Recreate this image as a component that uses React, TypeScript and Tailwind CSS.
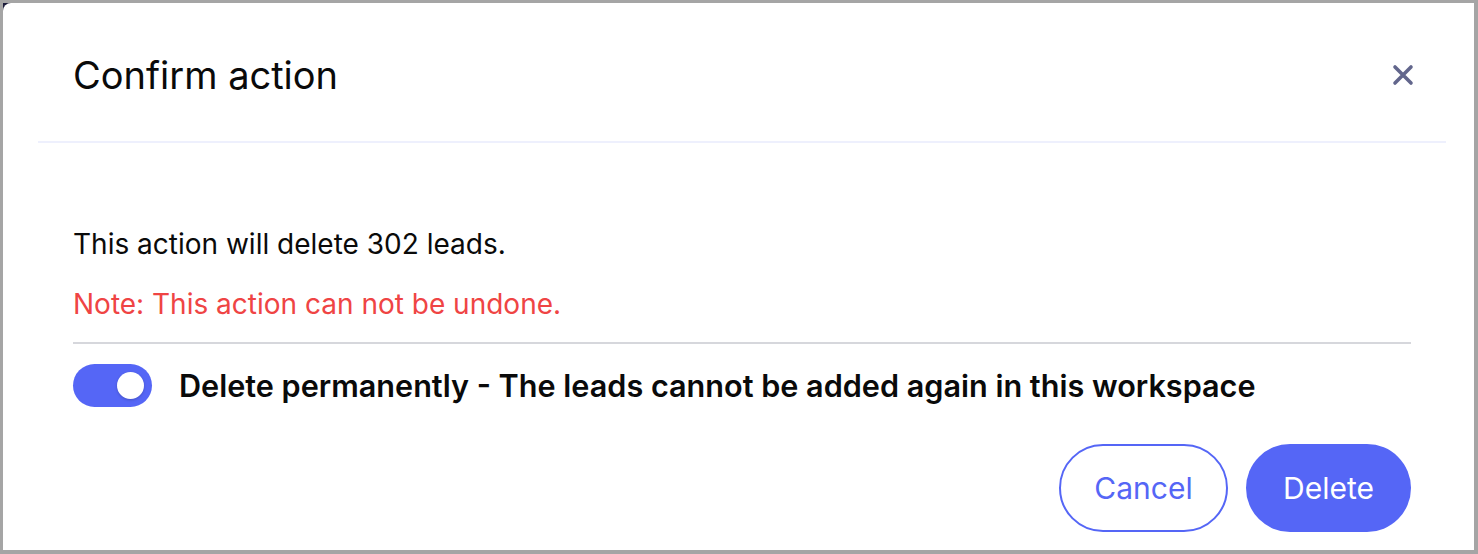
import React from "react";

export default function App() {
  return (
    <div
      className="w-[1478px] h-[554px] bg-[#a5a5a5] pl-[3px] pt-[3px] pr-[4px] pb-[4px]"
      style={{ fontFamily: "Inter, 'Noto Sans', sans-serif" }}
    >
      <div className="w-full h-full bg-[#1c1c3a]">
        <div className="w-full h-full bg-white rounded-tl-[8px] flex flex-col">
          <div className="h-[138px] pt-[6px] flex items-center justify-between pl-[70px] pr-[60px]">
            <h1 className="text-[38px] leading-none text-[#0a0a0a] font-normal">Confirm action</h1>
            <button className="w-[22px] h-[22px] flex items-center justify-center">
              <svg width="22" height="22" viewBox="0 0 22 22" fill="none">
                <path d="M3 3L19 19M19 3L3 19" stroke="#62668c" strokeWidth="3.6" strokeLinecap="round" />
              </svg>
            </button>
          </div>
          <div className="ml-[35px] mr-[28px] h-[2px] bg-[#eef0fd]" />
          <div className="pl-[70px] pr-[63px] pt-[84px] flex flex-col">
            <p className="text-[28px] leading-[34px] text-[#0a0a0a]">This action will delete 302 leads.</p>
            <p className="mt-[26px] text-[28px] leading-[34px] text-[#ef4444]">Note: This action can not be undone.</p>
            <div className="mt-[21px] h-[2px] bg-[#d6d7dc]" />
            <div className="mt-[20px] flex items-center gap-[27px]">
              <div className="w-[79px] h-[43px] rounded-full bg-[#5566f6] flex items-center justify-end pr-[8px]">
                <div className="w-[27px] h-[27px] rounded-full bg-white shadow-[0_1px_3px_rgba(0,0,0,0.2)]" />
              </div>
              <span className="text-[30.6px] leading-[36px] font-semibold text-[#0a0a0a]">
                Delete permanently - The leads cannot be added again in this workspace
              </span>
            </div>
            <div className="mt-[37px] flex justify-end gap-[18px]">
              <button className="w-[169px] h-[88px] rounded-full border-2 border-[#5566f6] text-[#5566f6] text-[30px]">
                Cancel
              </button>
              <button className="w-[165px] h-[88px] rounded-full bg-[#5566f6] text-white text-[30px]">
                Delete
              </button>
            </div>
          </div>
        </div>
      </div>
    </div>
  );
}
